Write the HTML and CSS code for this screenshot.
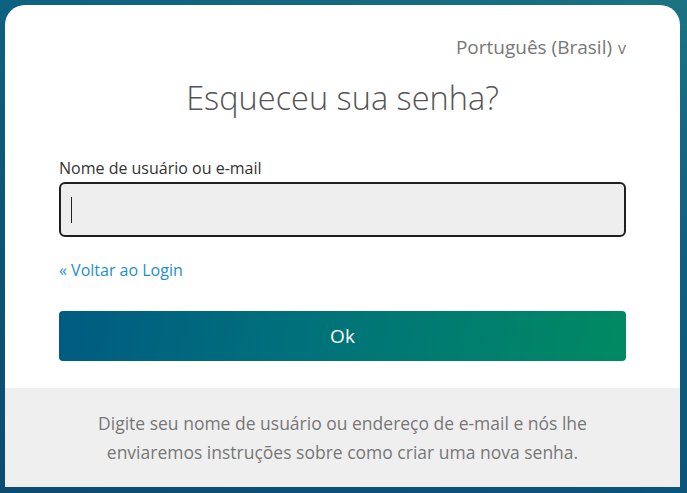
FILE: index.html
```html
<!DOCTYPE html>
<html lang="pt-BR">
<head>
<meta charset="utf-8">
<title>Esqueceu sua senha?</title>
<link rel="stylesheet" href="styles.css">
</head>
<body>
<div class="card">
  <div class="main">
    <div class="lang">Português (Brasil) <span class="caret">v</span></div>
    <h1 class="title">Esqueceu sua senha?</h1>
    <label class="label" for="user">Nome de usuário ou e-mail</label>
    <div class="input"><span class="cursor"></span></div>
    <a class="back" href="#">« Voltar ao Login</a>
    <button class="ok">Ok</button>
  </div>
  <div class="footer">
    <p>Digite seu nome de usuário ou endereço de e-mail e nós lhe<br>enviaremos instruções sobre como criar uma nova senha.</p>
  </div>
</div>
</body>
</html>
```

FILE: styles.css
```css
html, body {
  margin: 0;
  padding: 0;
  height: 100%;
}
body {
  font-family: "Open Sans", "Noto Sans", sans-serif;
  background: linear-gradient(200deg, #1b7381 0%, #0f6282 30%, #0a5579 65%, #0b4c71 100%);
  padding: 5px 7px 6px 5px;
  box-sizing: border-box;
  overflow: hidden;
}
.card {
  width: 675px;
  height: 482px;
  background: #fff;
  border-radius: 20px 20px 0 0;
  display: flex;
  flex-direction: column;
  overflow: hidden;
}
.main {
  flex: 1;
  padding: 31px 54px 0 54px;
  display: flex;
  flex-direction: column;
}
.lang {
  align-self: flex-end;
  font-size: 19px;
  line-height: 22px;
  color: #777;
}
.caret {
  font-size: 16px;
  margin-left: 1px;
}
.title {
  margin: 17px 0 0 0;
  font-weight: 300;
  font-size: 32.5px;
  line-height: 44px;
  color: #555;
  text-align: center;
}
.label {
  margin-top: 37px;
  font-size: 16px;
  line-height: 22px;
  color: #333;
}
.input {
  margin-top: 3px;
  height: 51px;
  border: 2px solid #1f1f1f;
  border-radius: 6px;
  background: #eee;
  display: flex;
  align-items: center;
  padding-left: 10px;
}
.cursor {
  width: 1px;
  height: 26px;
  background: #222;
}
.back {
  margin-top: 22px;
  font-size: 16px;
  line-height: 22px;
  color: #1a8fd0;
  text-decoration: none;
  align-self: flex-start;
}
.ok {
  margin-top: 30px;
  height: 50px;
  border: none;
  border-radius: 4px;
  background: linear-gradient(100deg, #005b82 0%, #00727a 45%, #008a62 100%);
  color: #fff;
  font-family: "Open Sans", "Noto Sans", sans-serif;
  font-size: 19px;
}
.footer {
  height: 99px;
  background: #efefef;
  display: flex;
  align-items: center;
  justify-content: center;
}
.footer p {
  margin: 0;
  text-align: center;
  font-size: 17.5px;
  line-height: 29px;
  color: #777;
}
```
